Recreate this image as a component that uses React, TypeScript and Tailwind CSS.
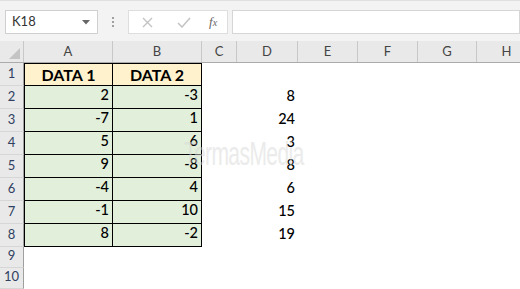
const cols = [
  { name: "A", w: "w-[89px]" },
  { name: "B", w: "w-[89px]" },
  { name: "C", w: "w-[35px]" },
  { name: "D", w: "w-[61px]" },
  { name: "E", w: "w-[60px]" },
  { name: "F", w: "w-[60px]" },
  { name: "G", w: "w-[59px]" },
  { name: "H", w: "w-[60px]" },
];

const data: [number, number, number | null][] = [
  [2, -3, 8],
  [-7, 1, 24],
  [5, 6, 3],
  [9, -8, 8],
  [-4, 4, 6],
  [-1, 10, 15],
  [8, -2, 19],
];

const font = { fontFamily: "Lato, 'Noto Sans', sans-serif" };

const RowHead = ({ n, h = "h-[23px]" }: { n: number; h?: string }) => (
  <div
    className={`${h} w-[24px] shrink-0 flex items-end justify-center pb-[2px] border-r border-b border-r-[#9f9f9f] border-b-[#d6d6d6] bg-[#e9e9e9] text-[13px] text-[#2f4060]`}
  >
    {n}
  </div>
);

export default function App() {
  return (
    <div className="w-[520px] h-[289px] overflow-hidden bg-white relative" style={font}>
      {/* formula bar */}
      <div className="h-[41px] bg-[#f3f3f3] border-t border-[#e0e0e0] flex items-start pt-[9px] pl-[5px]">
        <div className="w-[93px] h-[24px] bg-white border border-[#d0d0d0] flex items-center justify-between pl-[6px] pr-[7px] text-[13px] text-[#333]">
          <span>K18</span>
          <svg width="8" height="5" viewBox="0 0 8 5">
            <path d="M0 0 L8 0 L4 4.5 Z" fill="#666" />
          </svg>
        </div>
        <div className="w-[30px] h-[24px] flex flex-col items-center justify-center gap-[2px]">
          <span className="w-[2px] h-[2px] bg-[#a0a0a0]" />
          <span className="w-[2px] h-[2px] bg-[#a0a0a0]" />
          <span className="w-[2px] h-[2px] bg-[#a0a0a0]" />
        </div>
        <div className="w-[100px] h-[24px] bg-white border border-[#dedede] flex items-center pl-[13px]">
          <svg width="11" height="11" viewBox="0 0 11 11">
            <path d="M1 1 L10 10 M10 1 L1 10" stroke="#c3c3c3" strokeWidth="1.4" />
          </svg>
          <svg width="14" height="11" viewBox="0 0 14 11" className="ml-[24px]">
            <path d="M1 6 L5 10 L13 1" stroke="#c3c3c3" strokeWidth="1.5" fill="none" />
          </svg>
          <span
            className="ml-[18px] text-[13px] italic text-[#666]"
            style={{ fontFamily: "'Liberation Serif', serif" }}
          >
            f<span className="text-[10px]">x</span>
          </span>
        </div>
        <div className="ml-[4px] flex-1 h-[24px] bg-white border border-[#d6d6d6]" />
      </div>

      {/* column headers */}
      <div className="flex h-[22px] bg-[#e9e9e9] border-b border-[#ababab]">
        <div className="w-[24px] shrink-0 border-r border-[#c8c8c8] flex items-end justify-end p-[3px]">
          <svg width="11" height="11" viewBox="0 0 11 11">
            <path d="M11 0 L11 11 L0 11 Z" fill="#c4c4c4" />
          </svg>
        </div>
        {cols.map((c) => (
          <div
            key={c.name}
            className={`${c.w} shrink-0 border-r border-[#c8c8c8] flex items-center justify-center text-[13px] text-[#444]`}
          >
            {c.name}
          </div>
        ))}
      </div>

      {/* row 1 */}
      <div className="flex">
        <RowHead n={1} />
        <div className="w-[89px] h-[23px] shrink-0 bg-[#fff2cc] border border-black flex items-center justify-center font-bold text-[16px] text-black">
          DATA 1
        </div>
        <div className="w-[89px] h-[23px] shrink-0 bg-[#fff2cc] border border-l-0 border-black flex items-center justify-center font-bold text-[16px] text-black">
          DATA 2
        </div>
      </div>

      {data.map(([a, b, d], i) => (
        <div key={i} className="flex">
          <RowHead n={i + 2} />
          <div className="w-[89px] h-[23px] shrink-0 bg-[#e2efda] border-x border-b border-black flex items-end justify-end pr-[3px] pb-[2px] text-[14.5px] font-medium text-black">
            {a}
          </div>
          <div className="w-[89px] h-[23px] shrink-0 bg-[#e2efda] border-r border-b border-black flex items-end justify-end pr-[3px] pb-[2px] text-[14.5px] font-medium text-black">
            {b}
          </div>
          <div className="w-[35px] shrink-0" />
          <div className="w-[61px] h-[23px] shrink-0 flex items-end justify-end pr-[3px] pb-[2px] text-[14.5px] font-medium text-black">
            {d}
          </div>
        </div>
      ))}

      <div className="flex">
        <RowHead n={9} h="h-[21px]" />
      </div>
      <div className="flex">
        <RowHead n={10} h="h-[21px]" />
      </div>

      {/* watermark */}
      <div
        className="absolute left-[184px] top-[128px] text-[34px] tracking-[-1px] text-[#d8d8d8] opacity-50 origin-left scale-x-[0.62] pointer-events-none"
        style={{ fontFamily: "'Liberation Sans', sans-serif" }}
      >
        TermasMedia
      </div>
    </div>
  );
}
